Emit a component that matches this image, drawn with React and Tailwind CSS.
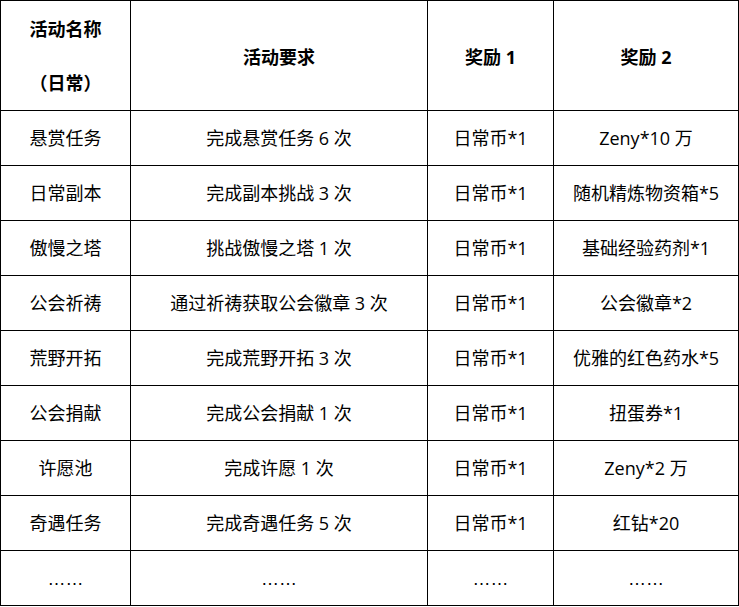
import React from "react";

const rows = [
  ["悬赏任务", "完成悬赏任务 6 次", "日常币*1", "Zeny*10 万"],
  ["日常副本", "完成副本挑战 3 次", "日常币*1", "随机精炼物资箱*5"],
  ["傲慢之塔", "挑战傲慢之塔 1 次", "日常币*1", "基础经验药剂*1"],
  ["公会祈祷", "通过祈祷获取公会徽章 3 次", "日常币*1", "公会徽章*2"],
  ["荒野开拓", "完成荒野开拓 3 次", "日常币*1", "优雅的红色药水*5"],
  ["公会捐献", "完成公会捐献 1 次", "日常币*1", "扭蛋券*1"],
  ["许愿池", "完成许愿 1 次", "日常币*1", "Zeny*2 万"],
  ["奇遇任务", "完成奇遇任务 5 次", "日常币*1", "红钻*20"],
];

const Cell = ({ children, className = "" }) => (
  <div className={`border-l border-t border-black flex items-center justify-center ${className}`}>
    {children}
  </div>
);

export default function App() {
  return (
    <div className="w-[739px] h-[607px] bg-white text-black text-[18px] font-['Open_Sans','Noto_Sans_CJK_SC',sans-serif]">
      <div className="grid grid-cols-[130px_297px_126px_185px] grid-rows-[110px_repeat(9,55px)] w-[739px] border-r border-b border-black">
        {/* Header */}
        <Cell className="flex-col font-bold">
          <span className="leading-[54px]">活动名称</span>
          <span className="leading-[54px]">（日常）</span>
        </Cell>
        <Cell className="font-bold pt-[4px]">活动要求</Cell>
        <Cell className="font-bold pt-[4px]">奖励 1</Cell>
        <Cell className="font-bold pt-[4px]">奖励 2</Cell>

        {rows.map((r) =>
          r.map((t, i) => (
            <Cell key={r[0] + i}>{t}</Cell>
          ))
        )}

        {/* Last row */}
        {[0, 1, 2, 3].map((i) => (
          <Cell key={"dots" + i} className="font-['Liberation_Sans'] pt-[3px]">
            ……
          </Cell>
        ))}
      </div>
    </div>
  );
}
